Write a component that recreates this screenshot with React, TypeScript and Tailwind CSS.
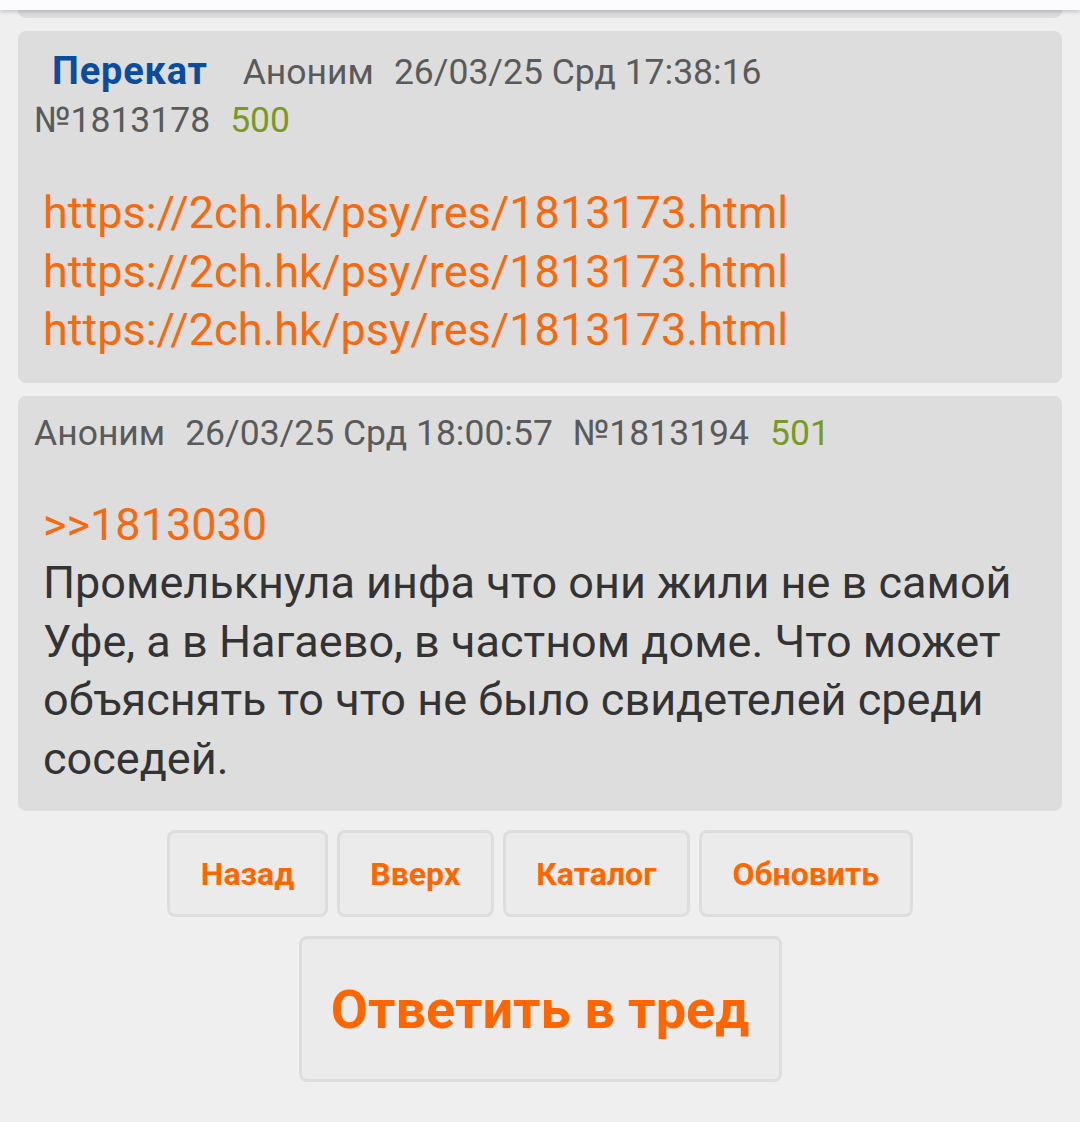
import React from "react";

const font = { fontFamily: "Roboto, 'Noto Sans', sans-serif" };

function Btn({ children }: { children: React.ReactNode }) {
  return (
    <div className="h-[87px] px-[30.5px] flex items-center justify-center rounded-[8px] border-[3px] border-[#dddddd] bg-[#ebebeb] text-[32px] font-bold text-[#ff6600]">
      {children}
    </div>
  );
}

export default function App() {
  const link = "https://2ch.hk/psy/res/1813173.html";
  return (
    <div className="relative w-[1080px] h-[1122px] bg-[#efefef] overflow-hidden" style={font}>
      <div className="absolute top-0 left-0 right-0 h-[10px] bg-[#fcfbfe] shadow-[0_2px_4px_rgba(0,0,0,0.18)] z-10" />
      <div className="mx-[18px] h-[18px] bg-[#dcdcdc] rounded-b-[8px]" />

      <div className="mt-[13px] mx-[18px] bg-[#dddddd] rounded-[8px] pl-[16px] pr-[16px] pt-[16px] pb-[23px]">
        <div className="text-[35.5px] leading-[48px] text-[#5a5a5a] whitespace-nowrap">
          <span className="ml-[18px] text-[38px] tracking-[0.8px] font-bold text-[#0b4c9c] mr-[35px]">Перекат</span>
          <span className="mr-[20px]">Аноним</span>
          <span className="mr-[20px]">26/03/25 Срд 17:38:16</span>
          <br />
          <span className="mr-[20px]">№1813178</span>
          <span className="text-[#789922]">500</span>
        </div>
        <div className="mt-[40px] ml-[9px] text-[45px] leading-[58.5px] text-[#f5690f]">
          <div>{link}</div>
          <div>{link}</div>
          <div>{link}</div>
        </div>
      </div>

      <div className="mt-[13px] mx-[18px] bg-[#dddddd] rounded-[8px] pl-[16px] pr-[16px] pt-[13px] pb-[23px]">
        <div className="text-[35.5px] leading-[48px] text-[#5a5a5a] whitespace-nowrap">
          <span className="mr-[20px]">Аноним</span>
          <span className="mr-[20px]">26/03/25 Срд 18:00:57</span>
          <span className="mr-[21px]">№1813194</span>
          <span className="text-[#789922]">501</span>
        </div>
        <div className="mt-[39px] ml-[9px] text-[45px] leading-[58.5px] text-[#333333]">
          <div className="text-[#f5690f]">&gt;&gt;1813030</div>
          <div>
            Промелькнула инфа что они жили не в самой Уфе, а в Нагаево, в частном доме. Что может объяснять то что не было свидетелей среди соседей.
          </div>
        </div>
      </div>

      <div className="mt-[19px] flex justify-center gap-[9px]">
        <Btn>Назад</Btn>
        <Btn>Вверх</Btn>
        <Btn>Каталог</Btn>
        <Btn>Обновить</Btn>
      </div>
      <div className="mt-[19px] flex justify-center">
        <div className="w-[483px] h-[146px] flex items-center justify-center rounded-[8px] border-[3px] border-[#dddddd] bg-[#ebebeb] text-[54px] font-bold text-[#ff6600]">
          Ответить в тред
        </div>
      </div>
    </div>
  );
}
